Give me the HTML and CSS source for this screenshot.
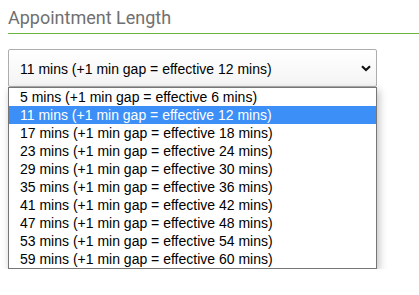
FILE: index.html
```html
<!DOCTYPE html>
<html lang="en">
<head>
  <meta charset="UTF-8" />
  <title>Appointment Length</title>
  <link rel="stylesheet" href="styles.css">
</head>
<body>
  <div class="section">
    <div class="section-title">Appointment Length</div>

    <div class="picker">
      <div class="select-box">
        <span>11 mins (+1 min gap = effective 12 mins)</span>
        <svg class="chevron" width="10" height="7" viewBox="0 0 10 7">
          <path d="M1 1.2 L5 5 L9 1.2" fill="none" stroke="#111" stroke-width="2.2"/>
        </svg>
      </div>

      <ul class="option-list">
        <li>5 mins (+1 min gap = effective 6 mins)</li>
        <li class="selected">11 mins (+1 min gap = effective 12 mins)</li>
        <li>17 mins (+1 min gap = effective 18 mins)</li>
        <li>23 mins (+1 min gap = effective 24 mins)</li>
        <li>29 mins (+1 min gap = effective 30 mins)</li>
        <li>35 mins (+1 min gap = effective 36 mins)</li>
        <li>41 mins (+1 min gap = effective 42 mins)</li>
        <li>47 mins (+1 min gap = effective 48 mins)</li>
        <li>53 mins (+1 min gap = effective 54 mins)</li>
        <li>59 mins (+1 min gap = effective 60 mins)</li>
      </ul>
    </div>
  </div>
</body>
</html>
```

FILE: styles.css
```css
body {
  margin: 0;
  padding: 8px 0 0 8px;
  background: #fff;
  font-family: 'Liberation Sans', Arial, sans-serif;
  color: #000;
}

.section-title {
  font-family: Roboto, sans-serif;
  font-size: 18px;
  color: #707070;
  line-height: 20px;
  padding-bottom: 5px;
  border-bottom: 1px solid #6db33f;
  margin-bottom: 15px;
}

.picker {
  width: 369px;
}

.select-box {
  height: 36px;
  border: 1px solid #adadad;
  border-radius: 2px;
  background: linear-gradient(#fff, #f4f4f4);
  display: flex;
  align-items: center;
  justify-content: space-between;
  padding: 0 5px 0 11px;
  font-size: 14px;
}

.select-box span {
  padding-top: 2px;
}

.option-list {
  list-style: none;
  margin: 0;
  padding: 0;
  border: 1px solid #767676;
  background: #fff;
  box-shadow: 2px 3px 8px rgba(0, 0, 0, 0.25);
}

.option-list li {
  height: 18px;
  line-height: 18px;
  padding-left: 11px;
  font-size: 14px;
}

.option-list li.selected {
  background: #3d8ff8;
  color: #fff;
}
```
